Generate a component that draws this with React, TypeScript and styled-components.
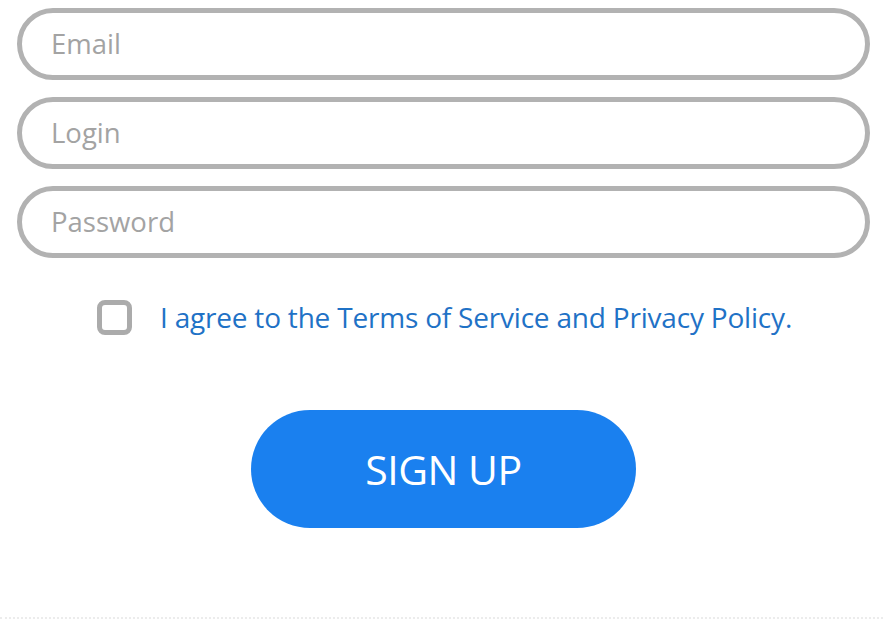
import React from "react";
import styled, { createGlobalStyle } from "styled-components";

const Global = createGlobalStyle`
  html, body { margin: 0; padding: 0; background: #ffffff; }
  body { font-family: "Open Sans", "Noto Sans", sans-serif; }
`;

const Page = styled.div`
  width: 883px;
  height: 621px;
  box-sizing: border-box;
  padding: 8px 13px 0 17px;
  display: flex;
  flex-direction: column;
  position: relative;
  overflow: hidden;
`;

const Fields = styled.div`
  display: flex;
  flex-direction: column;
  gap: 17px;
`;

const Field = styled.input`
  box-sizing: border-box;
  width: 100%;
  height: 72px;
  border: 5px solid #b2b2b2;
  border-radius: 36px;
  padding: 0 0 2px 29px;
  font-family: "Open Sans", sans-serif;
  font-size: 27.5px;
  color: #444;
  background: #fff;
  outline: none;
  &::placeholder { color: #a3a3a3; }
`;

const AgreeRow = styled.label`
  display: flex;
  align-items: center;
  justify-content: center;
  gap: 28px;
  margin-top: 40px;
  margin-left: 2px;
`;

const Box = styled.span`
  box-sizing: border-box;
  width: 35px;
  height: 35px;
  border: 5px solid #ababab;
  border-radius: 8px;
  flex: none;
`;

const AgreeText = styled.span`
  font-family: "Open Sans", sans-serif;
  font-size: 28px;
  color: #1f72c6;
  letter-spacing: -0.2px;
`;

const SignUp = styled.button`
  align-self: center;
  margin: 74px 0 0 0;
  width: 385px;
  height: 118px;
  border: none;
  border-radius: 59px;
  background: #1a80ef;
  color: #ffffff;
  font-family: "Open Sans", sans-serif;
  font-size: 41px;
  letter-spacing: -0.5px;
  cursor: pointer;
`;

const Dotted = styled.div`
  position: absolute;
  left: 0;
  right: 0;
  bottom: 2px;
  border-top: 2px dotted #ececec;
`;

export default function App() {
  return (
    <Page>
      <Global />
      <Fields>
        <Field placeholder="Email" type="email" />
        <Field placeholder="Login" type="text" />
        <Field placeholder="Password" type="password" />
      </Fields>
      <AgreeRow>
        <Box />
        <AgreeText>I agree to the Terms of Service and Privacy Policy.</AgreeText>
      </AgreeRow>
      <SignUp>SIGN UP</SignUp>
      <Dotted />
    </Page>
  );
}
